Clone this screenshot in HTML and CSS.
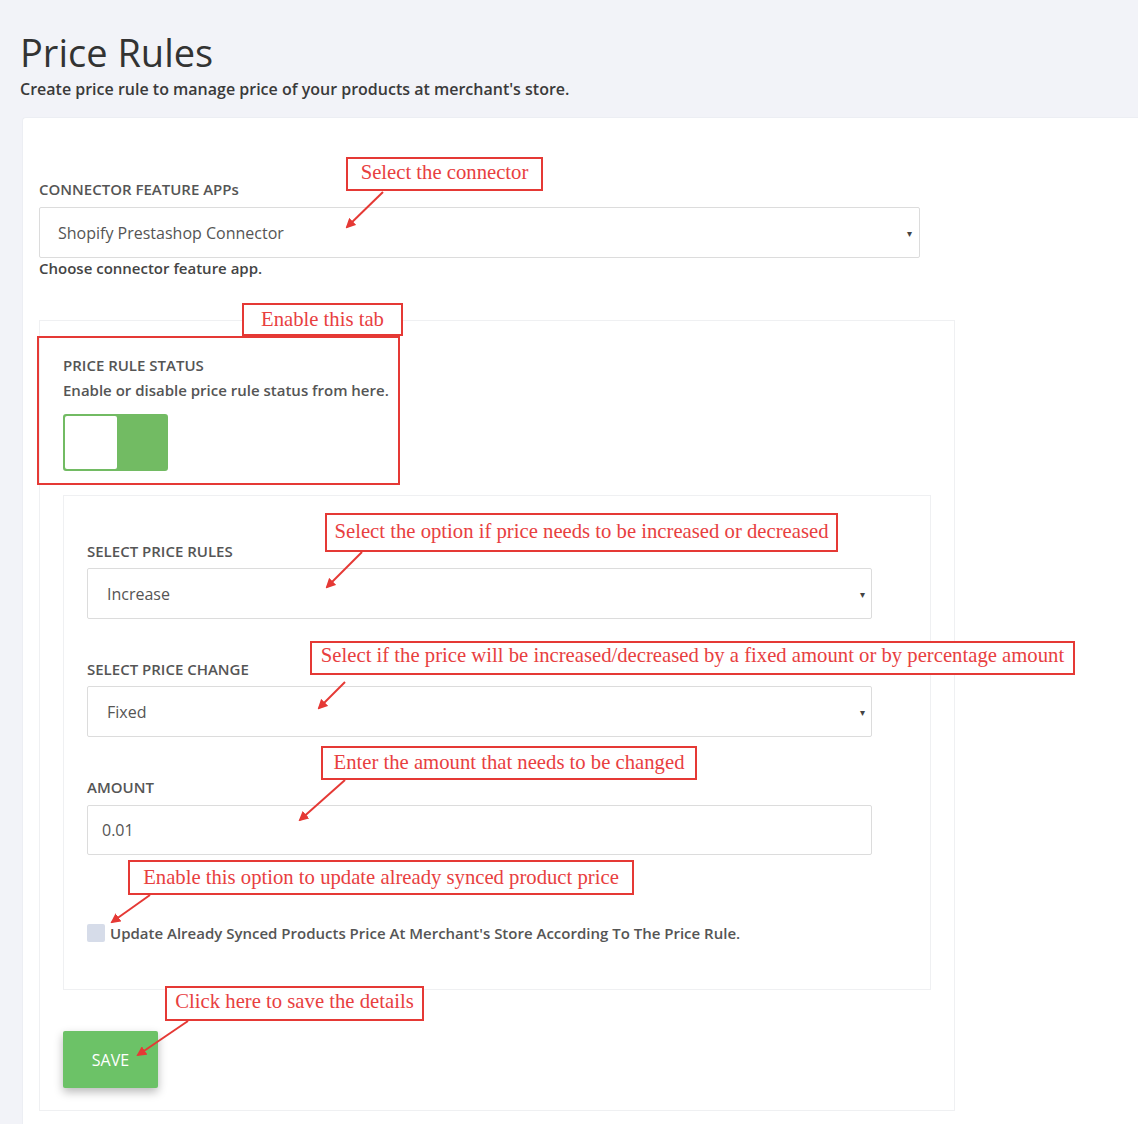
FILE: index.html
```html
<!DOCTYPE html>
<html lang="en">
<head>
<meta charset="utf-8">
<title>Price Rules</title>
<link rel="stylesheet" href="styles.css">
</head>
<body>
<div class="page">
  <header class="head">
    <h1 class="title">Price Rules</h1>
    <p class="subtitle">Create price rule to manage price of your products at merchant's store.</p>
  </header>

  <main class="card">
    <div class="field">
      <div class="label">CONNECTOR FEATURE APPs</div>
      <div class="select select-wide"><span>Shopify Prestashop Connector</span><span class="caret">&#9662;</span></div>
      <div class="help">Choose connector feature app.</div>
    </div>

    <section class="panel">
      <div class="status">
        <div class="label">PRICE RULE STATUS</div>
        <div class="desc">Enable or disable price rule status from here.</div>
        <div class="toggle"><div class="knob"></div></div>
      </div>

      <div class="inner">
        <div class="label">SELECT PRICE RULES</div>
        <div class="select select-mid"><span>Increase</span><span class="caret">&#9662;</span></div>

        <div class="label gap">SELECT PRICE CHANGE</div>
        <div class="select select-mid"><span>Fixed</span><span class="caret">&#9662;</span></div>

        <div class="label gap">AMOUNT</div>
        <div class="select select-input"><span>0.01</span></div>

        <div class="check-row">
          <span class="checkbox"></span>
          <span class="check-label">Update Already Synced Products Price At Merchant's Store According To The Price Rule.</span>
        </div>
      </div>

      <button class="save">SAVE</button>
    </section>
  </main>

  <div class="note n1">Select the connector</div>
  <div class="note n2">Enable this tab</div>
  <div class="outline"></div>
  <div class="note n3">Select the option if price needs to be increased or decreased</div>
  <div class="note n4">Select if the price will be increased/decreased by a fixed amount or by percentage amount</div>
  <div class="note n5">Enter the amount that needs to be changed</div>
  <div class="note n6">Enable this option to update already synced product price</div>
  <div class="note n7">Click here to save the details</div>

  <svg class="arrows" width="1138" height="1124" viewBox="0 0 1138 1124">
    <defs>
      <marker id="ah" markerWidth="10" markerHeight="10" refX="8" refY="5" orient="auto" markerUnits="userSpaceOnUse">
        <path d="M0,0 L10,5 L0,10 Z" fill="#e53935"/>
      </marker>
    </defs>
    <g stroke="#e53935" stroke-width="2" fill="none">
      <line x1="383" y1="192" x2="347" y2="227" marker-end="url(#ah)"/>
      <line x1="362" y1="552" x2="327" y2="587" marker-end="url(#ah)"/>
      <line x1="345" y1="682" x2="319" y2="708" marker-end="url(#ah)"/>
      <line x1="345" y1="780" x2="300" y2="820" marker-end="url(#ah)"/>
      <line x1="150" y1="895" x2="112" y2="922" marker-end="url(#ah)"/>
      <line x1="188" y1="1021" x2="138" y2="1055" marker-end="url(#ah)"/>
    </g>
  </svg>
</div>
</body>
</html>
```

FILE: styles.css
```css
* { box-sizing: border-box; }

html, body {
  margin: 0;
  padding: 0;
}

body {
  background: #f2f3f8;
  font-family: "Open Sans", "Noto Sans", sans-serif;
  color: #555;
}

.page {
  position: relative;
  width: 1138px;
  height: 1124px;
  overflow: hidden;
}

.head {
  padding: 29px 0 0 20px;
}

.title {
  margin: 0;
  font-size: 38px;
  line-height: 46px;
  font-weight: 400;
  color: #333;
}

.subtitle {
  margin: 4px 0 0;
  font-size: 16px;
  line-height: 20px;
  font-weight: 600;
  color: #3a3a3a;
}

.card {
  margin: 18px 0 0 22px;
  height: 1030px;
  background: #fff;
  border-top: 1px solid #eceef3;
  border-left: 1px solid #eceef3;
  border-radius: 4px 0 0 0;
  padding: 61px 0 0 16px;
}

.label {
  font-size: 15px;
  line-height: 21px;
  font-weight: 600;
  color: #555;
}

.label.gap {
  margin-top: 40px;
}

.select {
  display: flex;
  align-items: center;
  justify-content: space-between;
  border: 1px solid #dcdcdc;
  border-radius: 2px;
  background: #fff;
  color: #555;
  font-size: 16px;
}

.select-wide {
  width: 881px;
  height: 51px;
  margin-top: 7px;
  padding: 0 7px 0 18px;
}

.select-mid {
  width: 785px;
  height: 51px;
  margin-top: 6px;
  padding: 0 6px 0 19px;
}

.select-input {
  width: 785px;
  height: 50px;
  margin-top: 7px;
  padding: 0 0 0 14px;
  font-size: 16px;
}

.caret {
  font-size: 10px;
  color: #444;
}

.help {
  font-size: 15px;
  line-height: 20px;
  font-weight: 600;
  color: #444;
}

.panel {
  width: 916px;
  margin-top: 42px;
  border: 1px solid #eff0f2;
  padding: 34px 0 22px 23px;
}

.desc {
  margin-top: 4px;
  font-size: 15px;
  line-height: 21px;
  font-weight: 600;
  color: #555;
}

.toggle {
  width: 105px;
  height: 57px;
  margin-top: 13px;
  background: #72bb63;
  border: 2px solid #72bb63;
  border-radius: 3px;
  padding: 0;
}

.knob {
  width: 52px;
  height: 53px;
  background: #fff;
  border-radius: 2px;
}

.inner {
  width: 868px;
  margin-top: 24px;
  border: 1px solid #eff0f2;
  padding: 45px 0 46px 23px;
}

.check-row {
  display: flex;
  align-items: center;
  margin-top: 67px;
  height: 21px;
}

.checkbox {
  width: 18px;
  height: 18px;
  background: #d6dce9;
  border-radius: 2px;
  margin-right: 5px;
}

.check-label {
  font-size: 15px;
  font-weight: 600;
  color: #555;
}

.save {
  display: block;
  margin-top: 41px;
  width: 95px;
  height: 57px;
  border: 0;
  border-radius: 2px;
  background: #6cc267;
  color: #fff;
  font-family: "Open Sans", "Noto Sans", sans-serif;
  font-size: 16px;
  box-shadow: 0 4px 10px rgba(0, 0, 0, 0.28);
}

/* Annotation overlays */
.note {
  position: absolute;
  background: #fff;
  border: 2px solid #e53935;
  color: #e8403f;
  font-family: "Liberation Serif", "Times New Roman", serif;
  font-size: 20.7px;
  white-space: nowrap;
  text-align: center;
}

.n1 { left: 346px; top: 157px; width: 197px; height: 34px; line-height: 26px; }
.n2 { left: 242px; top: 303px; width: 161px; height: 33px; line-height: 29px; }
.n3 { left: 325px; top: 513px; width: 513px; height: 39px; line-height: 33px; }
.n4 { left: 310px; top: 641px; width: 765px; height: 34px; line-height: 25px; }
.n5 { left: 321px; top: 746px; width: 376px; height: 34px; line-height: 29px; }
.n6 { left: 128px; top: 860px; width: 506px; height: 35px; line-height: 31px; }
.n7 { left: 165px; top: 986px; width: 259px; height: 35px; line-height: 27px; }

.outline {
  position: absolute;
  left: 37px;
  top: 336px;
  width: 363px;
  height: 149px;
  border: 2px solid #e53935;
}

.arrows {
  position: absolute;
  left: 0;
  top: 0;
  pointer-events: none;
}
```
